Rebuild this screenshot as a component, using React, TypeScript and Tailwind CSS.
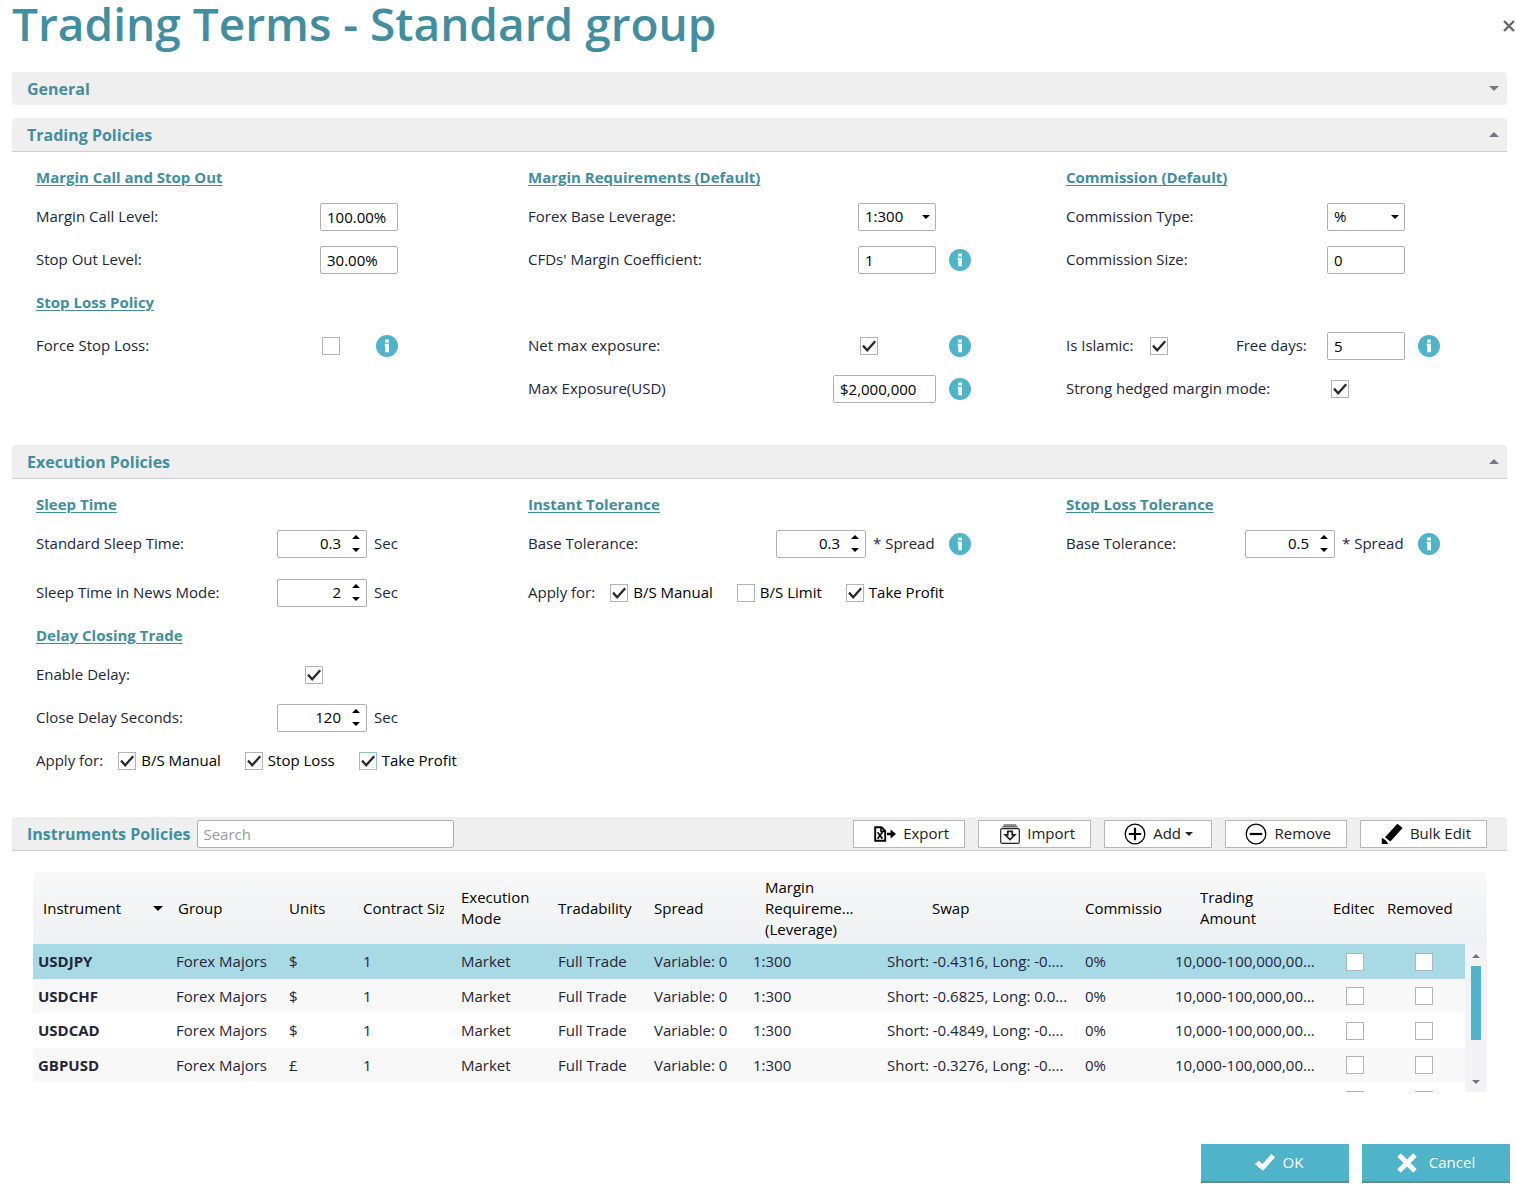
import React, { useId, useState } from 'react';

const InfoIcon: React.FC = () => (
    <svg viewBox="0 0 22 22" className="h-[22px] w-[22px] shrink-0" role="img" aria-label="Info">
        <circle cx="11" cy="11" r="11" fill="#4fb3ca" />
        <path d="M9.2 4.4h3.8v3.2H9.2zM8.6 8.8H13v8.4H9.3v-6.6h-.7z" fill="#fff" />
    </svg>
);

const Triangle: React.FC<{ up?: boolean; className?: string }> = ({ up, className }) => (
    <svg viewBox="0 0 10 5" className={className} fill="currentColor" aria-hidden="true">
        <path d={up ? 'M0 5 5 0l5 5z' : 'M0 0h10L5 5z'} />
    </svg>
);

const Check: React.FC<{ id?: string; checked?: boolean; focused?: boolean; label?: string }> = ({ id, checked = false, focused, label }) => {
    const [on, setOn] = useState(checked);
    return (
        <span className="grid h-[18px] w-[18px] shrink-0">
            <input
                id={id}
                type="checkbox"
                aria-label={label}
                checked={on}
                onChange={() => setOn(!on)}
                className={`col-start-1 row-start-1 h-[18px] w-[18px] appearance-none border bg-white ${focused ? 'border-[#8fc3d0]' : 'border-[#b4b4b4]'}`}
            />
            {on && (
                <svg viewBox="0 0 18 18" className="pointer-events-none col-start-1 row-start-1 h-[18px] w-[18px]" aria-hidden="true">
                    <path d="M3 8.6 7.2 13.2 15.2 4.2" fill="none" stroke="#2a2a2a" strokeWidth="2.3" />
                </svg>
            )}
        </span>
    );
};

const inputStyle = 'h-7 rounded-xs border border-[#b0b0b0] bg-white text-[15px] text-black';

const TextBox: React.FC<{ id?: string; value: string; wide?: boolean }> = ({ id, value, wide }) => (
    <input id={id} type="text" defaultValue={value} className={`${inputStyle} shrink-0 px-1.5 ${wide ? 'w-[103px]' : 'w-[78px]'}`} />
);

const Dropdown: React.FC<{ id?: string; options: string[] }> = ({ id, options }) => (
    <span className="grid w-[78px] shrink-0 items-center">
        <select id={id} className={`${inputStyle} col-start-1 row-start-1 w-full appearance-none px-1.5`}>
            {options.map(o => <option key={o}>{o}</option>)}
        </select>
        <Triangle className="pointer-events-none col-start-1 row-start-1 mr-1.5 w-2 justify-self-end text-black" />
    </span>
);

const Spinner: React.FC<{ id?: string; value: string; unit: string }> = ({ id, value, unit }) => (
    <>
        <span className={`${inputStyle} flex w-[90px] shrink-0 items-center`}>
            <input id={id} type="text" defaultValue={value} className="w-full min-w-0 flex-1 pr-[5px] text-right" />
            <span className="flex w-5 flex-col items-center gap-[9px]">
                <button type="button" aria-label="Increase"><Triangle up className="w-2" /></button>
                <button type="button" aria-label="Decrease"><Triangle className="w-2" /></button>
            </span>
        </span>
        <span className="ml-[7px]">{unit}</span>
    </>
);

// The control column has its own width per row, the label takes what is left
const Field: React.FC<{ label: string; width: string; info?: boolean; children: (id: string) => React.ReactNode }> = ({ label, width, info, children }) => {
    const id = useId();
    return (
        <div className="flex h-[43px] items-center">
            <label htmlFor={id} className="flex-1">{label}</label>
            <div className={`flex items-center ${width}`}>
                {children(id)}
                {info && <span className="ml-auto"><InfoIcon /></span>}
            </div>
        </div>
    );
};

const SubHeading: React.FC<{ children: React.ReactNode; className?: string }> = ({ children, className = '' }) => (
    <h3 className={`flex h-[35px] items-center text-[15px] font-bold text-[#428e9e] underline underline-offset-2 ${className}`}>{children}</h3>
);

const ApplyFor: React.FC<{ options: { name: string; checked?: boolean; focused?: boolean }[] }> = ({ options }) => (
    <div className="flex h-[43px] items-center whitespace-nowrap">
        <span className="mr-[15px]">Apply for:</span>
        <div className="flex gap-6 text-black">
            {options.map(o => (
                <label key={o.name} className="flex items-center gap-[5px]">
                    <Check checked={o.checked} focused={o.focused} />
                    {o.name}
                </label>
            ))}
        </div>
    </div>
);

const SectionBar: React.FC<{ title: string; open?: boolean }> = ({ title, open }) => (
    <h2 className={`rounded-t-sm bg-[#efefef] ${open ? 'border-b border-[#cfcfcf]' : 'rounded-b-sm'}`}>
        <button type="button" aria-expanded={!!open} className="flex h-[33px] w-full items-center justify-between pr-2 pl-[15px] text-base font-bold text-[#428e9e]">
            {title}
            <Triangle up={open} className="w-2.5 text-[#777784]" />
        </button>
    </h2>
);

const ToolButton: React.FC<{ icon: React.ReactNode; width: string; children: React.ReactNode }> = ({ icon, width, children }) => (
    <button type="button" className={`flex h-7 items-center justify-end gap-[7px] border border-[#b8b8b8] bg-white pr-[15px] text-[15px] text-[#222] ${width}`}>
        {icon}
        {children}
    </button>
);

const ExportIcon = () => (
    <svg viewBox="0 0 22 16" className="h-4 w-[22px]" aria-hidden="true">
        <path d="M1.2 1.2h6.3l3.7 3.6v10H1.2z" fill="none" stroke="#000" strokeWidth="1.9" />
        <path d="M7 1v4.4h4M3.6 6.2l4.8 6.6M8.4 6.2l-4.8 6.6" fill="none" stroke="#000" strokeWidth="1.6" />
        <path d="M13 6.8h3.6V3.4L22 8l-5.4 4.6V9.2H13z" />
    </svg>
);

const ImportIcon = () => (
    <svg viewBox="0 0 20 20" className="h-5 w-5" fill="none" stroke="#222" strokeWidth="1.2" aria-hidden="true">
        <path d="M3.6 1h12.8M2.4 2.8h15.2" strokeWidth="1" />
        <rect x=".7" y="4.7" width="18.6" height="14.6" rx="1.2" />
        <path d="M7.8 7.4h4.4v3.4h2.6L10 15.6l-4.8-4.8h2.6z" strokeWidth="1.7" />
    </svg>
);

const CircleIcon: React.FC<{ plus?: boolean }> = ({ plus }) => (
    <svg viewBox="0 0 22 22" className="h-[22px] w-[22px]" fill="none" stroke="#000" aria-hidden="true">
        <circle cx="11" cy="11" r="9.8" strokeWidth="1.3" />
        <path d={plus ? 'M4.8 11h12.4M11 4.8v12.4' : 'M4.8 11h12.4'} strokeWidth="2.2" />
    </svg>
);

const PencilIcon = () => (
    <svg viewBox="0 0 22 22" className="h-[22px] w-[22px]" aria-hidden="true">
        <path d="M16.4.8 21.6 5 9.4 18.6 4 14.2zM.8 14.8 4.4 17l3 4H.8z" />
    </svg>
);

const columns = [
    { title: 'Instrument', width: 'w-[138px]', pad: 'pl-2.5 pr-2' },
    { title: 'Group', width: 'w-[113px]', pad: 'pl-[7px] pr-2' },
    { title: 'Units', width: 'w-[74px]' },
    { title: 'Contract Size', width: 'w-[98px]', pad: 'pl-[5px] pr-3' },
    { title: 'Execution\nMode', width: 'w-[97px]' },
    { title: 'Tradability', width: 'w-[96px]' },
    { title: 'Spread', width: 'w-[99px]' },
    { title: 'Margin\nRequireme...\n(Leverage)', width: 'w-[134px]', pad: 'pl-[17px] pr-2' },
    { title: 'Swap', width: 'w-[198px]', pad: 'pl-[50px] pr-2' },
    { title: 'Commission', width: 'w-[90px]' },
    { title: 'Trading\nAmount', width: 'w-[158px]', pad: 'pl-[30px] pr-2' },
    { title: 'Edited', width: 'w-[54px]' },
    { title: 'Removed', width: 'w-[83px]' },
    { title: '', width: 'w-[22px]' },
];

const instruments = [
    { name: 'USDJPY', unit: '$', swap: 'Short: -0.4316, Long: -0....' },
    { name: 'USDCHF', unit: '$', swap: 'Short: -0.6825, Long: 0.0...' },
    { name: 'USDCAD', unit: '$', swap: 'Short: -0.4849, Long: -0....' },
    { name: 'GBPUSD', unit: '£', swap: 'Short: -0.3276, Long: -0....' },
];

const InstrumentTable: React.FC = () => (
    <div className="relative mr-5 ml-[21px] h-[220px] overflow-hidden">
        <table className="w-full table-fixed border-collapse text-left whitespace-nowrap">
            <colgroup>
                {columns.map(c => <col key={c.title} className={c.width} />)}
            </colgroup>
            <thead className="bg-linear-to-b from-[#f8f8f8] to-[#eff1f4] text-black">
                <tr className="h-[72px]">
                    {columns.map((c, i) => (
                        <th key={c.title} scope="col" className={`font-normal ${c.pad ?? 'pr-2 pl-[5px]'}`}>
                            <div className="flex items-center justify-between">
                                <span className="overflow-hidden leading-[21px] whitespace-pre">{c.title}</span>
                                {i === 0 && <Triangle className="w-2.5" />}
                            </div>
                        </th>
                    ))}
                </tr>
            </thead>
            <tbody className="*:odd:h-[35px] *:even:h-[34px]">
                {instruments.map((row, i) => (
                    <tr key={row.name} className={`*:px-[5px] ${i === 0 ? 'bg-[#a8dae5]' : i % 2 ? 'bg-[#f8f8f8]' : 'bg-white'}`}>
                        <td className="font-bold">{row.name}</td>
                        <td>Forex Majors</td>
                        <td>{row.unit}</td>
                        <td>1</td>
                        <td>Market</td>
                        <td>Full Trade</td>
                        <td>Variable: 0</td>
                        <td>1:300</td>
                        <td>{row.swap}</td>
                        <td>0%</td>
                        <td>10,000-100,000,00...</td>
                        <td><div className="flex justify-center"><Check label={`${row.name} edited`} /></div></td>
                        <td><div className="flex justify-center"><Check label={`${row.name} removed`} /></div></td>
                        <td />
                    </tr>
                ))}
                <tr>
                    <td colSpan={11} />
                    <td><div className="flex justify-center"><Check label="Edited" /></div></td>
                    <td><div className="flex justify-center"><Check label="Removed" /></div></td>
                    <td />
                </tr>
            </tbody>
        </table>
        <div className="absolute right-0 bottom-0 flex h-[148px] w-[22px] flex-col items-center bg-[#f3f3f5] pt-2.5 pb-2 text-[#777]">
            <Triangle up className="w-2" />
            <div className="mt-2 h-[74px] w-2.5 bg-[#4fb3ca]" />
            <Triangle className="mt-auto w-2" />
        </div>
    </div>
);

export default function App() {
    return (
        <main className="bg-white pr-[9px] pl-3 font-['Open_Sans','Noto_Sans',sans-serif] text-[15px] text-[#25253a]">
            <header className="flex h-[72px] items-start justify-between">
                <h1 className="text-[46px] leading-[46px] font-semibold text-[#428e9e]">Trading Terms - Standard group</h1>
                <button type="button" aria-label="Close" className="-mr-2 mt-5">
                    <svg viewBox="0 0 12 12" className="h-3 w-3" aria-hidden="true">
                        <path d="m1 1 10 10M11 1 1 11" stroke="#666" strokeWidth="2.4" />
                    </svg>
                </button>
            </header>

            <SectionBar title="General" />

            <section className="mt-[13px]">
                <SectionBar title="Trading Policies" open />
                <div className="grid grid-cols-[492fr_538fr_441fr] pt-2 pl-6">
                    <div className="w-[362px]">
                        <SubHeading>Margin Call and Stop Out</SubHeading>
                        <Field label="Margin Call Level:" width="w-[78px]">{id => <TextBox id={id} value="100.00%" />}</Field>
                        <Field label="Stop Out Level:" width="w-[78px]">{id => <TextBox id={id} value="30.00%" />}</Field>
                        <SubHeading className="my-1">Stop Loss Policy</SubHeading>
                        <Field label="Force Stop Loss:" width="w-[76px]" info>{id => <Check id={id} />}</Field>
                    </div>
                    <div className="w-[443px]">
                        <SubHeading>Margin Requirements (Default)</SubHeading>
                        <Field label="Forex Base Leverage:" width="w-[113px]">{id => <Dropdown id={id} options={['1:300', '1:200', '1:100']} />}</Field>
                        <Field label="CFDs' Margin Coefficient:" width="w-[113px]" info>{id => <TextBox id={id} value="1" />}</Field>
                        <div className="mt-[43px]">
                            <Field label="Net max exposure:" width="w-[111px]" info>{id => <Check id={id} checked />}</Field>
                            <Field label="Max Exposure(USD)" width="w-[138px]" info>{id => <TextBox id={id} value="$2,000,000" wide />}</Field>
                        </div>
                    </div>
                    <div className="w-[374px]">
                        <SubHeading>Commission (Default)</SubHeading>
                        <Field label="Commission Type:" width="w-[113px]">{id => <Dropdown id={id} options={['%', '$']} />}</Field>
                        <Field label="Commission Size:" width="w-[113px]">{id => <TextBox id={id} value="0" />}</Field>
                        <div className="mt-[43px]">
                            <div className="flex">
                                <label className="flex w-[170px] items-center gap-4">Is Islamic: <Check checked /></label>
                                <div className="flex-1">
                                    <Field label="Free days:" width="w-[113px]" info>{id => <TextBox id={id} value="5" />}</Field>
                                </div>
                            </div>
                            <Field label="Strong hedged margin mode:" width="w-[109px]">{id => <Check id={id} checked />}</Field>
                        </div>
                    </div>
                </div>
            </section>

            <section className="mt-[35px]">
                <SectionBar title="Execution Policies" open />
                <div className="grid grid-cols-[492fr_538fr_441fr] pt-2 pl-6">
                    <div className="w-[362px]">
                        <SubHeading>Sleep Time</SubHeading>
                        <Field label="Standard Sleep Time:" width="w-[121px]">{id => <Spinner id={id} value="0.3" unit="Sec" />}</Field>
                        <div className="mt-1.5">
                            <Field label="Sleep Time in News Mode:" width="w-[121px]">{id => <Spinner id={id} value="2" unit="Sec" />}</Field>
                        </div>
                        <SubHeading className="mt-1">Delay Closing Trade</SubHeading>
                        <Field label="Enable Delay:" width="w-[93px]">{id => <Check id={id} checked />}</Field>
                        <Field label="Close Delay Seconds:" width="w-[121px]">{id => <Spinner id={id} value="120" unit="Sec" />}</Field>
                        <ApplyFor options={[{ name: 'B/S Manual', checked: true }, { name: 'Stop Loss', checked: true }, { name: 'Take Profit', checked: true, focused: true }]} />
                    </div>
                    <div className="w-[443px]">
                        <SubHeading>Instant Tolerance</SubHeading>
                        <Field label="Base Tolerance:" width="w-[195px]" info>{id => <Spinner id={id} value="0.3" unit="* Spread" />}</Field>
                        <div className="mt-1.5">
                            <ApplyFor options={[{ name: 'B/S Manual', checked: true }, { name: 'B/S Limit' }, { name: 'Take Profit', checked: true }]} />
                        </div>
                    </div>
                    <div className="w-[374px]">
                        <SubHeading>Stop Loss Tolerance</SubHeading>
                        <Field label="Base Tolerance:" width="w-[195px]" info>{id => <Spinner id={id} value="0.5" unit="* Spread" />}</Field>
                    </div>
                </div>
            </section>

            <section className="mt-[35px]">
                <div className="mb-[21px] flex h-[34px] items-center rounded-t-sm border-b border-[#cfcfcf] bg-[#efefef] pr-5 pl-[15px]">
                    <h2 className="text-base font-bold text-[#428e9e]">Instruments Policies</h2>
                    <input type="search" aria-label="Search instruments" placeholder="Search" className={`${inputStyle} ml-[7px] w-[257px] px-[5px] placeholder:text-[#999]`} />
                    <div className="ml-auto flex gap-[13px]">
                        <ToolButton icon={<ExportIcon />} width="w-[112px]">Export</ToolButton>
                        <ToolButton icon={<ImportIcon />} width="w-[113px]">Import</ToolButton>
                        <ToolButton icon={<CircleIcon plus />} width="w-[108px]">
                            <span className="mr-[3px] flex items-center gap-1">Add <Triangle className="w-2" /></span>
                        </ToolButton>
                        <ToolButton icon={<CircleIcon />} width="w-[122px]">Remove</ToolButton>
                        <ToolButton icon={<PencilIcon />} width="w-[127px]">Bulk Edit</ToolButton>
                    </div>
                </div>
                <InstrumentTable />
            </section>

            <footer className="-mr-[3px] mt-[52px] flex justify-end gap-[13px] text-[15px] text-white">
                <button type="button" className="flex h-[39px] w-[148px] items-center justify-center gap-2 border-b-2 border-[#6b8793] bg-[#4fb3ca] pl-2">
                    <svg viewBox="0 0 20 18" className="h-[18px] w-5" fill="#fff" aria-hidden="true">
                        <path d="M0 10.2 3.6 6.6 7.4 10 16.4 0 20 3.2 8 16.8z" />
                    </svg>
                    OK
                </button>
                <button type="button" className="flex h-[39px] w-[148px] items-center justify-center gap-3 border-b-2 border-[#6b8793] bg-[#4fb3ca]">
                    <svg viewBox="0 0 20 20" className="h-5 w-5" aria-hidden="true">
                        <path d="m2 2 16 16M18 2 2 18" stroke="#fff" strokeWidth="5" />
                    </svg>
                    Cancel
                </button>
            </footer>
        </main>
    );
}
